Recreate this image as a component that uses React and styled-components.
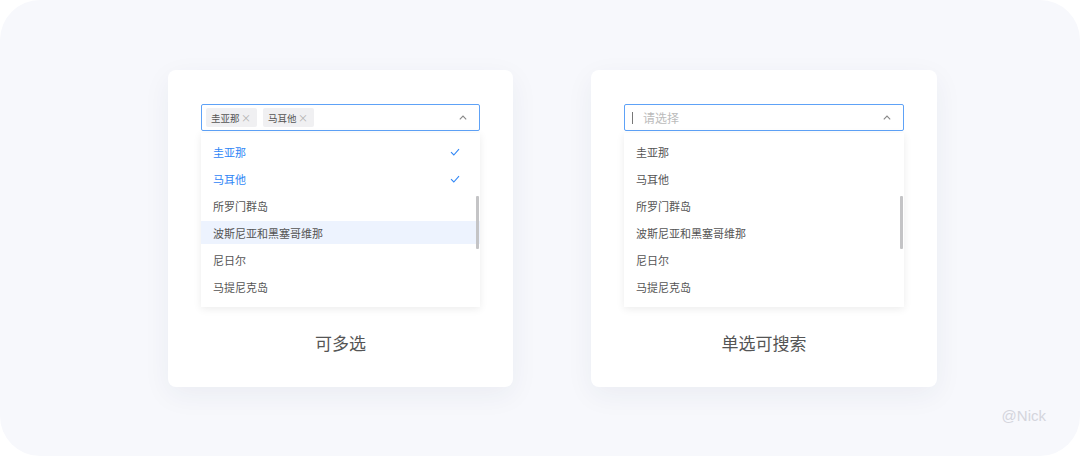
import styled, { createGlobalStyle } from "styled-components";

const GlobalStyle = createGlobalStyle`
  html, body {
    margin: 0;
    padding: 0;
    background: #ffffff;
  }
  body {
    font-family: "Noto Sans CJK SC", "Noto Sans", sans-serif;
  }
`;

const Frame = styled.div`
  width: 1080px;
  height: 456px;
  background: #ffffff;
  overflow: hidden;
`;

const Panel = styled.div`
  position: relative;
  height: 456px;
  background: #f7f8fc;
  border-radius: 40px;
  display: flex;
  align-items: flex-start;
  gap: 78px;
  padding: 70px 0 0 168px;
  box-sizing: border-box;
`;

const Card = styled.div`
  width: ${(p) => p.$width}px;
  height: 317px;
  background: #ffffff;
  border-radius: 8px;
  box-shadow: 0 8px 28px rgba(40, 50, 90, 0.06);
  padding: 34px 33px 0;
  box-sizing: border-box;
  display: flex;
  flex-direction: column;
`;

const Selector = styled.div`
  height: 27px;
  border: 1px solid #5ea2f7;
  border-radius: 2px;
  box-sizing: border-box;
  display: flex;
  align-items: center;
  gap: 6px;
  padding: 0 12px 0 4px;
`;

const Tag = styled.span`
  height: 19px;
  width: 51px;
  box-sizing: border-box;
  background: #f0f0f2;
  border-radius: 2px;
  padding: 0 6px 0 5px;
  display: inline-flex;
  align-items: center;
  justify-content: space-between;
  font-size: 9.5px;
  color: #555;
`;

const TagClose = styled.span`
  font-size: 10px;
  color: #b0b0b0;
  line-height: 1;
`;

const Cursor = styled.span`
  width: 1px;
  height: 12px;
  background: #777;
  margin-left: 3px;
`;

const Placeholder = styled.span`
  font-size: 12px;
  color: #bbb;
  margin-left: 4px;
`;

const Caret = styled.svg`
  margin-left: auto;
  width: 8px;
  height: 5px;
`;

const Dropdown = styled.div`
  position: relative;
  margin-top: 2px;
  padding: 7px 0 9px;
  background: #fff;
  box-shadow: 0 2px 8px rgba(0, 0, 0, 0.08);
  display: flex;
  flex-direction: column;
  gap: 4px;
`;

const Item = styled.div`
  height: 23px;
  display: flex;
  align-items: center;
  justify-content: space-between;
  padding: 0 20px 0 12px;
  font-size: 11px;
  color: ${(p) => (p.$selected ? "#2f86f6" : "#555")};
  background: ${(p) => (p.$hover ? "#edf3fe" : "transparent")};
`;

const ScrollThumb = styled.div`
  position: absolute;
  right: 1px;
  top: 63px;
  width: 3px;
  height: 53px;
  background: #c4c4c6;
  border-radius: 1px;
`;

const Label = styled.div`
  margin-top: 23px;
  text-align: center;
  font-size: 17px;
  color: #555;
`;

const Signature = styled.div`
  position: absolute;
  right: 34px;
  bottom: 32px;
  font-family: "Liberation Sans", Arial, sans-serif;
  font-size: 15px;
  color: #d4d5dc;
`;

const countries = ["圭亚那", "马耳他", "所罗门群岛", "波斯尼亚和黑塞哥维那", "尼日尔", "马提尼克岛"];

function Check() {
  return (
    <svg width="10" height="8" viewBox="0 0 10 8">
      <path d="M1 4.2 L3.8 7 L9 1.2" fill="none" stroke="#2f86f6" strokeWidth="1.1" />
    </svg>
  );
}

function UpCaret() {
  return (
    <Caret viewBox="0 0 8 5">
      <path d="M0.8 4.3 L4 1 L7.2 4.3" fill="none" stroke="#888" strokeWidth="1.1" />
    </Caret>
  );
}

function Options({ selected = [], hover }) {
  return (
    <Dropdown>
      {countries.map((c) => (
        <Item key={c} $selected={selected.includes(c)} $hover={hover === c}>
          <span>{c}</span>
          {selected.includes(c) && <Check />}
        </Item>
      ))}
      <ScrollThumb />
    </Dropdown>
  );
}

export default function App() {
  return (
    <>
      <GlobalStyle />
      <Frame>
        <Panel>
          <Card $width={345}>
            <Selector>
              <Tag>
                圭亚那<TagClose>×</TagClose>
              </Tag>
              <Tag>
                马耳他<TagClose>×</TagClose>
              </Tag>
              <UpCaret />
            </Selector>
            <Options selected={["圭亚那", "马耳他"]} hover="波斯尼亚和黑塞哥维那" />
            <Label>可多选</Label>
          </Card>
          <Card $width={346}>
            <Selector>
              <Cursor />
              <Placeholder>请选择</Placeholder>
              <UpCaret />
            </Selector>
            <Options />
            <Label>单选可搜索</Label>
          </Card>
          <Signature>@Nick</Signature>
        </Panel>
      </Frame>
    </>
  );
}
